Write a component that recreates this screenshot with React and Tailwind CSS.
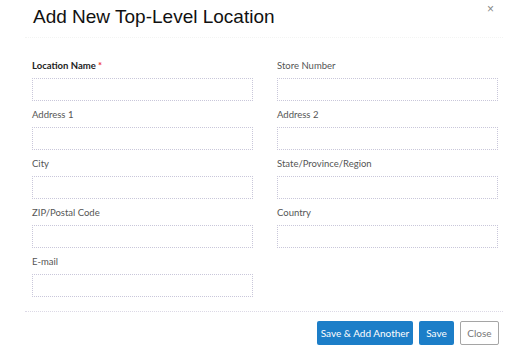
export default function App() {
  const fields = [
    ["Location Name", "Store Number"],
    ["Address 1", "Address 2"],
    ["City", "State/Province/Region"],
    ["ZIP/Postal Code", "Country"],
    ["E-mail", null],
  ];
  const lato = "font-['Lato','Noto_Sans',sans-serif]";
  return (
    <div className="w-[528px] h-[353px] bg-white overflow-hidden">
      <div className="mx-[25px] pt-[5px] pb-[8px] border-b border-dotted border-[#f3f4f3] flex justify-between items-start">
        <h1 className="pl-[8px] text-[19px] leading-[24px] text-[#111] font-['Liberation_Sans',Arial,sans-serif]">
          Add New Top-Level Location
        </h1>
        <span className="mt-[-2px] mr-[9px] text-[12px] leading-[12px] text-[#888] font-['Liberation_Sans',Arial,sans-serif]">×</span>
      </div>
      <div className={`pt-[22px] pb-[14px] pl-[32px] grid grid-cols-[221px_221px] gap-x-[24px] gap-y-[8px] ${lato}`}>
        {fields.flat().map((label, i) =>
          label ? (
            <div key={i} className="flex flex-col">
              {i === 0 ? (
                <label className="text-[9.5px] leading-[12px] font-bold text-[#222] mb-[6px]">
                  Location Name <span className="text-[#e33]">*</span>
                </label>
              ) : (
                <label className="text-[9.5px] leading-[12px] text-[#555] mb-[6px]">{label}</label>
              )}
              <div className="h-[23px] border border-dotted border-[#c9c7da] bg-white" />
            </div>
          ) : (
            <div key={i} />
          )
        )}
      </div>
      <div className={`mx-[25px] border-t border-dotted border-[#dcd9e6] pt-[9px] pr-[4px] flex justify-end gap-[6px] ${lato}`}>
        <button className="w-[96px] h-[24px] rounded-[2px] bg-[#1c7ec8] text-white text-[10px] flex items-center justify-center">
          Save &amp; Add Another
        </button>
        <button className="w-[35px] h-[24px] rounded-[2px] bg-[#1c7ec8] text-white text-[10px] flex items-center justify-center">
          Save
        </button>
        <button className="w-[39px] h-[24px] rounded-[2px] border border-[#a5a5a5] bg-white text-[#777] text-[10px] flex items-center justify-center">
          Close
        </button>
      </div>
    </div>
  );
}
